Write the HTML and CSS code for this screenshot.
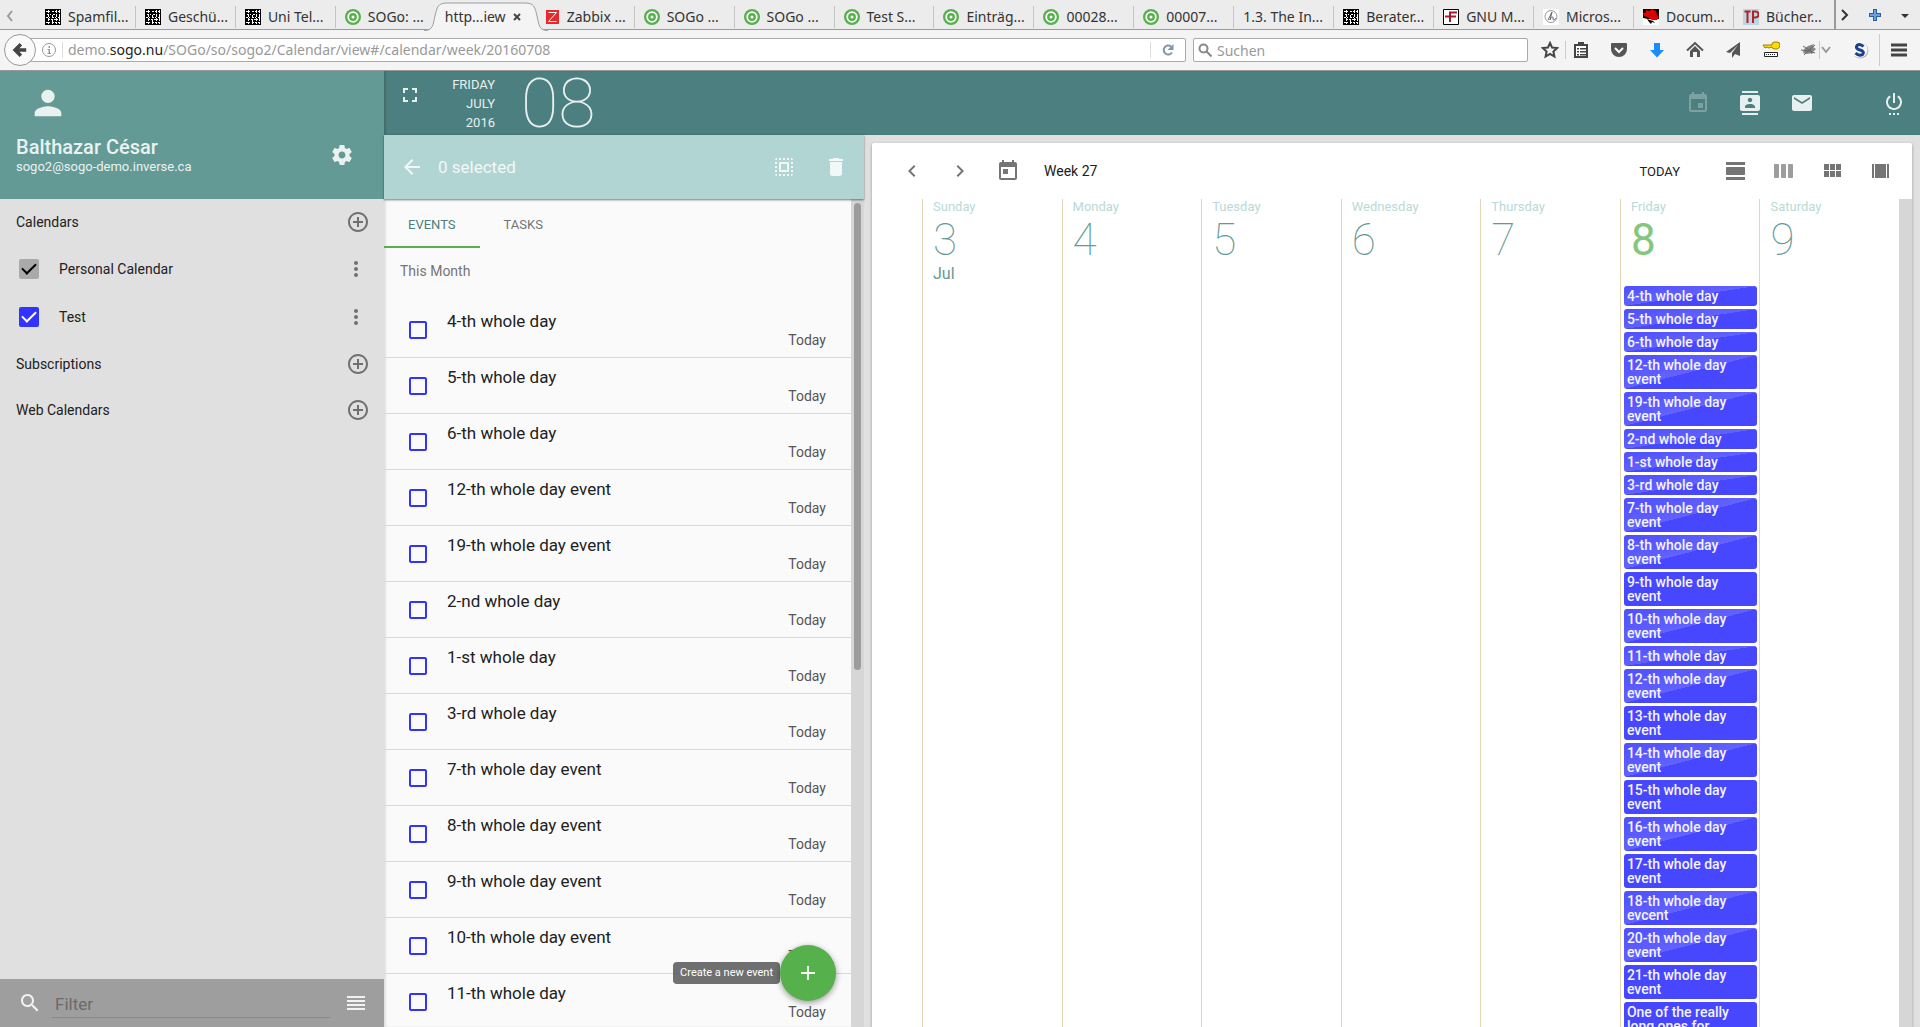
FILE: index.html
```html
<!DOCTYPE html>
<html lang="en">
<head>
    <meta charset="UTF-8">
    <meta name="viewport" content="width=device-width, initial-scale=1.0">
    <title>SOGo Calendar</title>
    <link rel="stylesheet" href="styles.css">
</head>
<body>
    <!-- Shared icons -->
    <svg class="sprite" aria-hidden="true">
        <symbol id="i-qr" viewBox="0 0 16 16"><path fill="#000" d="M0 0h16v16H0z"/><path stroke="#fff" stroke-width="1" stroke-dasharray="2 1 1 2" d="M1 2.500h14M2 5.500h13M1 8.500h14M3 10.500h12M1 13.500h14"/><path stroke="#fff" stroke-width="1" stroke-dasharray="3 1" d="M3.500 1v14M7.500 6v9M11.500 1v14M14.500 1v14"/></symbol>
        <symbol id="i-sogo" viewBox="0 0 16 16"><circle cx="8" cy="8" r="8" fill="#56b04c"/><circle cx="8" cy="8" r="4.800" fill="none" stroke="#fff" stroke-width="1.800"/><circle cx="8" cy="8" r="1.500" fill="#fff"/></symbol>
        <symbol id="i-plus-circle" viewBox="0 0 24 24"><path d="M13 7h-2v4H7v2h4v4h2v-4h4v-2h-4V7zm-1-5C6.480 2 2 6.480 2 12s4.480 10 10 10 10-4.480 10-10S17.520 2 12 2zm0 18c-4.410 0-8-3.590-8-8s3.590-8 8-8 8 3.590 8 8-3.590 8-8 8z"/></symbol>
        <symbol id="i-more" viewBox="0 0 24 24"><path d="M12 8c1.100 0 2-.9 2-2s-.9-2-2-2-2 .9-2 2 .9 2 2 2zm0 2c-1.100 0-2 .9-2 2s.9 2 2 2 2-.9 2-2-.9-2-2-2zm0 6c-1.100 0-2 .9-2 2s.9 2 2 2 2-.9 2-2-.9-2-2-2z"/></symbol>
        <symbol id="i-person" viewBox="0 0 24 24"><path d="M12 12c2.210 0 4-1.790 4-4s-1.790-4-4-4-4 1.790-4 4 1.790 4 4 4zm0 2c-2.670 0-8 1.340-8 4v2h16v-2c0-2.660-5.330-4-8-4z"/></symbol>
        <symbol id="i-settings" viewBox="0 0 24 24"><path d="M19.430 12.980c.04-.32.07-.64.07-.98s-.03-.66-.07-.98l2.110-1.650c.19-.15.24-.42.12-.64l-2-3.460c-.12-.22-.39-.3-.61-.22l-2.490 1c-.52-.4-1.080-.73-1.690-.98l-.38-2.650C14.460 2.180 14.250 2 14 2h-4c-.25 0-.46.18-.49.42l-.38 2.650c-.61.25-1.170.59-1.690.98l-2.490-1c-.23-.09-.49 0-.61.22l-2 3.460c-.13.22-.07.49.12.64l2.110 1.650c-.04.32-.07.65-.07.98s.03.66.07.98l-2.110 1.650c-.19.15-.24.42-.12.64l2 3.460c.12.22.39.3.61.22l2.490-1c.52.4 1.080.73 1.690.98l.38 2.650c.03.24.24.42.49.42h4c.25 0 .46-.18.49-.42l.38-2.650c.61-.25 1.170-.59 1.690-.98l2.490 1c.23.09.49 0 .61-.22l2-3.460c.12-.22.07-.49-.12-.64l-2.110-1.650zM12 15.500c-1.930 0-3.500-1.570-3.500-3.500s1.570-3.500 3.500-3.500 3.500 1.570 3.500 3.500-1.570 3.500-3.500 3.500z"/></symbol>
        <symbol id="i-search" viewBox="0 0 24 24"><path d="M15.500 14h-.79l-.28-.27C15.410 12.590 16 11.110 16 9.500 16 5.910 13.090 3 9.500 3S3 5.910 3 9.500 5.910 16 9.500 16c1.610 0 3.090-.59 4.230-1.570l.27.28v.79l5 4.990L20.490 19l-4.990-5zm-6 0C7.010 14 5 11.990 5 9.500S7.010 5 9.500 5 14 7.010 14 9.500 11.990 14 9.500 14z"/></symbol>
        <symbol id="i-headline" viewBox="0 0 24 24"><path d="M3 5h18v2H3zM3 9h18v2H3zM3 13h18v2H3zM3 17h18v2H3z"/></symbol>
        <symbol id="i-fullscreen" viewBox="0 0 24 24"><path d="M7 14H5v5h5v-2H7v-3zm-2-4h2V7h3V5H5v5zm12 7h-3v2h5v-5h-2v3zM14 5v2h3v3h2V5h-5z"/></symbol>
        <symbol id="i-event" viewBox="0 0 24 24"><path d="M17 12h-5v5h5v-5zM16 1v2H8V1H6v2H5c-1.110 0-1.990.9-1.990 2L3 19c0 1.100.89 2 2 2h14c1.100 0 2-.9 2-2V5c0-1.100-.9-2-2-2h-1V1h-2zm3 18H5V8h14v11z"/></symbol>
        <symbol id="i-today" viewBox="0 0 24 24"><path d="M19 3h-1V1h-2v2H8V1H6v2H5c-1.110 0-1.990.9-1.990 2L3 19c0 1.100.89 2 2 2h14c1.100 0 2-.9 2-2V5c0-1.100-.9-2-2-2zm0 16H5V8h14v11zM7 10h5v5H7z"/></symbol>
        <symbol id="i-contacts" viewBox="0 0 24 24"><path d="M20 0H4v2h16V0zM4 24h16v-2H4v2zM20 4H4c-1.100 0-2 .9-2 2v12c0 1.100.9 2 2 2h16c1.100 0 2-.9 2-2V6c0-1.100-.9-2-2-2zm-8 2.750c1.240 0 2.250 1.010 2.250 2.250s-1.010 2.250-2.250 2.250S9.750 10.240 9.750 9 10.760 6.750 12 6.750zM17 17H7v-1.500c0-1.670 3.330-2.500 5-2.500s5 .83 5 2.500V17z"/></symbol>
        <symbol id="i-mail" viewBox="0 0 24 24"><path d="M20 4H4c-1.100 0-1.990.9-1.990 2L2 18c0 1.100.9 2 2 2h16c1.100 0 2-.9 2-2V6c0-1.100-.9-2-2-2zm0 4l-8 5-8-5V6l8 5 8-5v2z"/></symbol>
        <symbol id="i-power" viewBox="0 0 24 24"><path d="M7 24h2v-2H7v2zm4 0h2v-2h-2v2zm2-22h-2v10h2V2zm3.560 2.440l-1.450 1.450C16.840 6.940 18 8.830 18 11c0 3.310-2.690 6-6 6s-6-2.690-6-6c0-2.170 1.160-4.060 2.880-5.120L7.440 4.440C5.360 5.880 4 8.280 4 11c0 4.420 3.580 8 8 8s8-3.580 8-8c0-2.720-1.360-5.120-3.440-6.560zM15 24h2v-2h-2v2z"/></symbol>
        <symbol id="i-back" viewBox="0 0 24 24"><path d="M20 11H7.830l5.590-5.590L12 4l-8 8 8 8 1.410-1.410L7.830 13H20v-2z"/></symbol>
        <symbol id="i-select-all" viewBox="0 0 24 24"><path d="M3 5h2V3c-1.100 0-2 .9-2 2zm0 8h2v-2H3v2zm4 8h2v-2H7v2zM3 9h2V7H3v2zm10-6h-2v2h2V3zm6 0v2h2c0-1.100-.9-2-2-2zM5 21v-2H3c0 1.100.9 2 2 2zm-2-4h2v-2H3v2zM9 3H7v2h2V3zm2 18h2v-2h-2v2zm8-8h2v-2h-2v2zm0 8c1.100 0 2-.9 2-2h-2v2zm0-12h2V7h-2v2zm0 8h2v-2h-2v2zm-4 4h2v-2h-2v2zm0-16h2V3h-2v2zM7 17h10V7H7v10zm2-8h6v6H9V9z"/></symbol>
        <symbol id="i-delete" viewBox="0 0 24 24"><path d="M6 19c0 1.100.9 2 2 2h8c1.100 0 2-.9 2-2V7H6v12zM19 4h-3.500l-1-1h-5l-1 1H5v2h14V4z"/></symbol>
        <symbol id="i-left" viewBox="0 0 24 24"><path d="M15.410 7.410L14 6l-6 6 6 6 1.410-1.410L10.830 12z"/></symbol>
        <symbol id="i-right" viewBox="0 0 24 24"><path d="M10 6L8.590 7.410 13.170 12l-4.580 4.590L10 18l6-6z"/></symbol>
        <symbol id="i-day" viewBox="0 0 24 24"><path d="M2 21h19v-3H2v3zM20 8H3c-.55 0-1 .45-1 1v6c0 .55.45 1 1 1h17c.55 0 1-.45 1-1V9c0-.55-.45-1-1-1zM2 3v3h19V3H2z"/></symbol>
        <symbol id="i-week" viewBox="0 0 24 24"><path d="M6 5H3c-.55 0-1 .45-1 1v12c0 .55.45 1 1 1h3c.55 0 1-.45 1-1V6c0-.55-.45-1-1-1zm14 0h-3c-.55 0-1 .45-1 1v12c0 .55.45 1 1 1h3c.55 0 1-.45 1-1V6c0-.55-.45-1-1-1zm-7 0h-3c-.55 0-1 .45-1 1v12c0 .55.45 1 1 1h3c.55 0 1-.45 1-1V6c0-.55-.45-1-1-1z"/></symbol>
        <symbol id="i-month" viewBox="0 0 24 24"><path d="M4 11h5V5H4v6zm0 7h5v-6H4v6zm6 0h5v-6h-5v6zm6 0h5v-6h-5v6zm-6-7h5V5h-5v6zm6-6v6h5V5h-5z"/></symbol>
        <symbol id="i-multi" viewBox="0 0 24 24"><path d="M4 5h2v14H4zM7 5h11v14H7zM19 5h2v14h-2z"/></symbol>
    </svg>

    <!-- Browser tabs -->
    <nav class="tabstrip" aria-label="Browser tabs">
        <svg class="tab-scroll" viewBox="0 0 12 14"><path d="M8 2L4 7l4 5" fill="none" stroke="#999" stroke-width="2"/></svg>
        <div class="tab"><svg class="favicon"><use href="#i-qr"/></svg>Spamfil...</div>
        <div class="tab"><svg class="favicon"><use href="#i-qr"/></svg>Geschü...</div>
        <div class="tab"><svg class="favicon"><use href="#i-qr"/></svg>Uni Tel...</div>
        <div class="tab tab-plain"><svg class="favicon"><use href="#i-sogo"/></svg>SOGo: ...</div>
        <div class="tab tab-active">
            <svg class="tab-shape" viewBox="0 0 124 30" preserveAspectRatio="none"><path d="M0 29.500C9 29.500 9 24 11 15 13 6 14 2 23 2H101C110 2 111 6 113 15 115 24 115 29.500 124 29.500V30H0z" fill="#f4f4f4"/><path d="M0 29.500C9 29.500 9 24 11 15 13 6 14 2 23 2H101C110 2 111 6 113 15 115 24 115 29.500 124 29.500" fill="none" stroke="#9a9fa6"/></svg>
            <span>http...iew</span>
            <button class="tab-close" aria-label="Close tab"><svg viewBox="0 0 8 8"><path d="M1 1l6 6M7 1L1 7" stroke="#444" stroke-width="2"/></svg></button>
        </div>
        <div class="tab"><svg class="favicon" viewBox="0 0 16 16"><path fill="#e8292c" d="M2 1h13v14H2z"/><path d="M4.500 3.500h8l-8 9h8" fill="none" stroke="#fff"/></svg>Zabbix ...</div>
        <div class="tab"><svg class="favicon"><use href="#i-sogo"/></svg>SOGo ...</div>
        <div class="tab"><svg class="favicon"><use href="#i-sogo"/></svg>SOGo ...</div>
        <div class="tab"><svg class="favicon"><use href="#i-sogo"/></svg>Test S...</div>
        <div class="tab"><svg class="favicon"><use href="#i-sogo"/></svg>Einträg...</div>
        <div class="tab"><svg class="favicon"><use href="#i-sogo"/></svg>00028...</div>
        <div class="tab"><svg class="favicon"><use href="#i-sogo"/></svg>00007...</div>
        <div class="tab">1.3. The In...</div>
        <div class="tab"><svg class="favicon"><use href="#i-qr"/></svg>Berater...</div>
        <div class="tab"><svg class="favicon" viewBox="0 0 16 16"><path fill="#fff" stroke="#000" d="M.5.500h15v15H.500z"/><path d="M7 13V3.500h7M2 7.500h11" fill="none" stroke="#a8192e" stroke-width="2"/></svg>GNU M...</div>
        <div class="tab"><svg class="favicon" viewBox="0 0 16 16"><path fill="#fff" d="M0 0h16v16H0z"/><circle cx="8" cy="7.500" r="6" fill="none" stroke="#999"/><path d="M5 11L9 3 7 11c1-4 4-4 3-1 0 2 2 1 3-1" fill="none" stroke="#666"/></svg>Micros...</div>
        <div class="tab"><svg class="favicon" viewBox="0 0 16 16"><path fill="#000" d="M0 0h16v10H0z"/><path fill="#fff" d="M0 9l5 1 6 3 5-3v6H0z"/><path fill="#d00" d="M3 1l3 1 3-2 4 2 1 4 2 2-2 3-5 0-5-3-3-1-1-3 3-1z"/><path fill="#000" d="M4 10l6 2 2 2-3-1-1 2-2-2z"/></svg>Docum...</div>
        <div class="tab tab-plain"><svg class="favicon" viewBox="0 0 16 16"><path fill="#bcd7e2" d="M0 0h16v16H0z"/><path d="M1.500 2.500h6M4.500 2v12M10 14V2.500h2.500a2 2 0 0 1 0 6H10" fill="none" stroke="#b3222b" stroke-width="2"/></svg>Bücher...</div>
        <div class="tab-tools">
            <svg viewBox="0 0 12 14"><path d="M3 2l5 5-5 5" fill="none" stroke="#333" stroke-width="2"/></svg>
            <svg viewBox="0 0 12 14"><path d="M6 1v12M0 7h12" stroke="#2a5ea8" stroke-width="4"/><path d="M6 2v10M1 7h10" stroke="#6ea0dc" stroke-width="2"/></svg>
            <svg viewBox="0 0 12 14"><path d="M2 6h8l-4 4z" fill="#333"/></svg>
        </div>
    </nav>

    <!-- Address bar -->
    <div class="navbar">
        <button class="nav-back" aria-label="Back"><svg viewBox="0 0 18 18"><path d="M16 9H5M10 2.500L3.500 9l6.500 6.500" fill="none" stroke="#444" stroke-width="4"/></svg></button>
        <div class="urlbar">
            <svg class="url-info" viewBox="0 0 16 16"><circle cx="8" cy="8" r="6.500" fill="none" stroke="#999"/><path d="M7.500 4h1.500v2H7.500zM6.500 7H9v4h1v1H6.500v-1h1V8h-1z" fill="#999"/></svg>
            <span class="url-text">demo.<b>sogo.nu</b>/SOGo/so/sogo2/Calendar/view#/calendar/week/20160708</span>
            <button class="url-reload" aria-label="Reload"><svg viewBox="0 0 14 14"><path d="M11 9.500A4.500 4.500 0 1 1 10 3.500" fill="none" stroke="#8595a8" stroke-width="2"/><path d="M12.500 1v6h-6z" fill="#8595a8"/></svg></button>
        </div>
        <div class="searchbar">
            <svg viewBox="0 0 14 14"><circle cx="5.500" cy="5.500" r="4" fill="none" stroke="#888" stroke-width="2"/><path d="M8.500 8.500l5 5" stroke="#888" stroke-width="2"/></svg>
            <input type="text" placeholder="Suchen" aria-label="Suchen">
        </div>
        <div class="nav-icons">
            <svg viewBox="0 0 18 18"><path d="M9 2l2.100 4.600 5 .5-3.700 3.400 1 5L9 13l-4.400 2.500 1-5L1.900 7.100l5-.5z" fill="none" stroke="#444" stroke-width="2"/></svg>
            <i class="nav-sep"></i>
            <svg viewBox="0 0 18 18"><path d="M3 4h12v12H3z" fill="#fff" stroke="#444" stroke-width="2"/><path d="M6 1h6v4H6zM5 7h2v1.500H5zM8 7h6v1.500H8zM5 10h2v1.500H5zM8 10h6v1.500H8zM5 13h2v1.500H5zM8 13h6v1.500H8z" fill="#444"/></svg>
            <svg viewBox="0 0 18 18"><path d="M2 2h14q1 0 1 1v5a8 8 0 0 1-16 0V3q0-1 1-1z" fill="#555"/><path d="M5 7l4 4 4-4" fill="none" stroke="#fff" stroke-width="2"/></svg>
            <svg viewBox="0 0 18 18"><path d="M6 2h6v7h4l-7 7.500L2 9h4z" fill="#1a8cff"/></svg>
            <svg viewBox="0 0 18 18"><path d="M1 9.500L9 2l8 7.500" fill="none" stroke="#555" stroke-width="2"/><path d="M4 10l5-5 5 5v6h-3v-5H7v5H4z" fill="#555"/></svg>
            <svg viewBox="0 0 18 18"><path d="M16 1v14l-5-2-3 4v-5l6-8-8 8-4-1z" fill="#555"/></svg>
            <svg viewBox="0 0 18 18"><path d="M1 4h9v-1q0-2 3-2h2q3 0 3 3t-3 4h-2q-3 0-3-2l-3 1-2-1-2 1z" fill="#fd0" stroke="#a08000"/><path d="M2.500 11.500h13v4h-13z" fill="#fff" stroke="#222"/><path d="M4 13.500h9" stroke="#222" stroke-dasharray="1 1"/></svg>
            <svg viewBox="0 0 18 18"><path d="M4 8l4-3 6-2-1 3 3 2-4 4-5 1-4-1z" fill="#888"/><path d="M3 5l6 4 6-5M4 14l6-6 2 5M1 9l8 1 6 2" fill="none" stroke="#666"/></svg>
            <i class="nav-sep nav-sep-tight"></i>
            <svg class="nav-chevron" viewBox="0 0 10 18"><path d="M1 6l4 5 4-5" fill="none" stroke="#999" stroke-width="2"/></svg>
            <svg viewBox="0 0 18 18"><circle cx="9.500" cy="9.500" r="8" fill="#bbb"/><circle cx="8.500" cy="8.500" r="8" fill="#f6f6f6"/><path d="M12.500 5.500Q9 2 6 4.500q-2 3 3 4.500t2.500 4.500Q8 15.500 4.500 12" fill="none" stroke="#1c3f8f" stroke-width="3"/></svg>
            <i class="nav-sep nav-sep-tall"></i>
            <svg viewBox="0 0 18 18"><path d="M1 4h16M1 9h16M1 14h16" stroke="#444" stroke-width="3"/></svg>
        </div>
    </div>

    <div class="app">
        <aside class="sidebar">
            <header class="user">
                <svg class="avatar"><use href="#i-person"/></svg>
                <div class="user-row">
                    <div>
                        <div class="user-name">Balthazar César</div>
                        <div class="user-mail">sogo2@sogo-demo.inverse.ca</div>
                    </div>
                    <button class="icon-btn" aria-label="Settings"><svg class="icon"><use href="#i-settings"/></svg></button>
                </div>
            </header>
            <div class="folders">
                <div class="folder-head">Calendars<button class="icon-btn" aria-label="New calendar"><svg class="icon"><use href="#i-plus-circle"/></svg></button></div>
                <div class="folder">
                    <label><input type="checkbox" class="check check-grey" checked>Personal Calendar</label>
                    <button class="icon-btn" aria-label="Options"><svg class="icon"><use href="#i-more"/></svg></button>
                </div>
                <div class="folder">
                    <label><input type="checkbox" class="check check-blue" checked>Test</label>
                    <button class="icon-btn" aria-label="Options"><svg class="icon"><use href="#i-more"/></svg></button>
                </div>
                <div class="folder-head">Subscriptions<button class="icon-btn" aria-label="Add subscription"><svg class="icon"><use href="#i-plus-circle"/></svg></button></div>
                <div class="folder-head">Web Calendars<button class="icon-btn" aria-label="Add web calendar"><svg class="icon"><use href="#i-plus-circle"/></svg></button></div>
            </div>
            <div class="filter">
                <svg class="icon"><use href="#i-search"/></svg>
                <input type="text" placeholder="Filter" aria-label="Filter">
                <button class="icon-btn" aria-label="Sort"><svg class="icon"><use href="#i-headline"/></svg></button>
            </div>
        </aside>

        <div class="main">
            <header class="topbar">
                <button class="icon-btn fullscreen" aria-label="Full screen"><svg class="icon"><use href="#i-fullscreen"/></svg></button>
                <div class="date-words">FRIDAY<br>JULY<br>2016</div>
                <div class="date-number">08</div>
                <nav class="modules">
                    <button class="icon-btn" aria-label="Calendar" disabled><svg class="icon"><use href="#i-event"/></svg></button>
                    <button class="icon-btn" aria-label="Address book"><svg class="icon"><use href="#i-contacts"/></svg></button>
                    <button class="icon-btn" aria-label="Mail"><svg class="icon"><use href="#i-mail"/></svg></button>
                    <button class="icon-btn power" aria-label="Disconnect"><svg class="icon"><use href="#i-power"/></svg></button>
                </nav>
            </header>

            <div class="content">
                <section class="list">
                    <div class="list-toolbar">
                        <button class="icon-btn" aria-label="Back"><svg class="icon"><use href="#i-back"/></svg></button>
                        <span class="selected">0 selected</span>
                        <button class="icon-btn" aria-label="Select all"><svg class="icon"><use href="#i-select-all"/></svg></button>
                        <button class="icon-btn" aria-label="Delete"><svg class="icon"><use href="#i-delete"/></svg></button>
                    </div>
                    <div class="list-body">
                        <div class="list-scroll">
                            <div class="list-tabs">
                                <button class="list-tab list-tab-active">EVENTS</button>
                                <button class="list-tab">TASKS</button>
                            </div>
                            <div class="subheader">This Month</div>
                            <label class="item"><input type="checkbox" class="box"><span class="item-title">4-th whole day</span><span class="item-date">Today</span></label>
                            <label class="item"><input type="checkbox" class="box"><span class="item-title">5-th whole day</span><span class="item-date">Today</span></label>
                            <label class="item"><input type="checkbox" class="box"><span class="item-title">6-th whole day</span><span class="item-date">Today</span></label>
                            <label class="item"><input type="checkbox" class="box"><span class="item-title">12-th whole day event</span><span class="item-date">Today</span></label>
                            <label class="item"><input type="checkbox" class="box"><span class="item-title">19-th whole day event</span><span class="item-date">Today</span></label>
                            <label class="item"><input type="checkbox" class="box"><span class="item-title">2-nd whole day</span><span class="item-date">Today</span></label>
                            <label class="item"><input type="checkbox" class="box"><span class="item-title">1-st whole day</span><span class="item-date">Today</span></label>
                            <label class="item"><input type="checkbox" class="box"><span class="item-title">3-rd whole day</span><span class="item-date">Today</span></label>
                            <label class="item"><input type="checkbox" class="box"><span class="item-title">7-th whole day event</span><span class="item-date">Today</span></label>
                            <label class="item"><input type="checkbox" class="box"><span class="item-title">8-th whole day event</span><span class="item-date">Today</span></label>
                            <label class="item"><input type="checkbox" class="box"><span class="item-title">9-th whole day event</span><span class="item-date">Today</span></label>
                            <label class="item"><input type="checkbox" class="box"><span class="item-title">10-th whole day event</span><span class="item-date">Today</span></label>
                            <label class="item"><input type="checkbox" class="box"><span class="item-title">11-th whole day</span><span class="item-date">Today</span></label>
                        </div>
                        <div class="scrollbar"><div class="scroll-thumb"></div></div>
                    </div>
                    <div class="fab-area">
                        <span class="tooltip">Create a new event</span>
                        <button class="fab" aria-label="Create a new event"><svg viewBox="0 0 24 24"><path d="M19 13h-6v6h-2v-6H5v-2h6V5h2v6h6v2z"/></svg></button>
                    </div>
                </section>

                <section class="calendar">
                    <div class="calendar-toolbar">
                        <button class="icon-btn" aria-label="Previous week"><svg class="icon"><use href="#i-left"/></svg></button>
                        <button class="icon-btn" aria-label="Next week"><svg class="icon"><use href="#i-right"/></svg></button>
                        <button class="icon-btn" aria-label="Choose date"><svg class="icon"><use href="#i-today"/></svg></button>
                        <span class="week">Week 27</span>
                        <button class="today">TODAY</button>
                        <button class="icon-btn" aria-label="Day"><svg class="icon"><use href="#i-day"/></svg></button>
                        <button class="icon-btn" aria-label="Week" disabled><svg class="icon"><use href="#i-week"/></svg></button>
                        <button class="icon-btn" aria-label="Month"><svg class="icon"><use href="#i-month"/></svg></button>
                        <button class="icon-btn" aria-label="Columns"><svg class="icon"><use href="#i-multi"/></svg></button>
                    </div>
                    <div class="week-grid">
                        <div class="hours"></div>
                        <div class="day"><div class="day-head"><span class="day-name">Sunday</span><span class="day-number">3</span><span class="day-month">Jul</span></div></div>
                        <div class="day"><div class="day-head"><span class="day-name">Monday</span><span class="day-number">4</span></div></div>
                        <div class="day"><div class="day-head"><span class="day-name">Tuesday</span><span class="day-number">5</span></div></div>
                        <div class="day"><div class="day-head"><span class="day-name">Wednesday</span><span class="day-number">6</span></div></div>
                        <div class="day"><div class="day-head"><span class="day-name">Thursday</span><span class="day-number">7</span></div></div>
                        <div class="day day-today">
                            <div class="day-head"><span class="day-name">Friday</span><span class="day-number">8</span></div>
                            <div class="event shine">4-th whole day</div>
                            <div class="event shine">5-th whole day</div>
                            <div class="event shine">6-th whole day</div>
                            <div class="event shine">12-th whole day event</div>
                            <div class="event shine">19-th whole day event</div>
                            <div class="event shine">2-nd whole day</div>
                            <div class="event shine">1-st whole day</div>
                            <div class="event shine">3-rd whole day</div>
                            <div class="event shine">7-th whole day event</div>
                            <div class="event shine">8-th whole day event</div>
                            <div class="event">9-th whole day event</div>
                            <div class="event shine">10-th whole day event</div>
                            <div class="event shine">11-th whole day</div>
                            <div class="event shine">12-th whole day event</div>
                            <div class="event">13-th whole day event</div>
                            <div class="event shine">14-th whole day event</div>
                            <div class="event">15-th whole day event</div>
                            <div class="event shine">16-th whole day event</div>
                            <div class="event">17-th whole day event</div>
                            <div class="event shine">18-th whole day evcent</div>
                            <div class="event shine">20-th whole day event</div>
                            <div class="event">21-th whole day event</div>
                            <div class="event">One of the really long ones for</div>
                        </div>
                        <div class="day"><div class="day-head"><span class="day-name">Saturday</span><span class="day-number">9</span></div></div>
                        <div class="scrollbar"></div>
                    </div>
                </section>
            </div>
        </div>
    </div>
</body>
</html>
```
FILE: styles.css
```css
:root {
    --teal: #639a96;
    --teal-dark: #4c7f7f;
    --teal-light: #b0d5d3;
    --green: #56b04c;
    --blue: #3333ff;
    --grey: #e0e0e0;
}
* {
    box-sizing: border-box;
}
body {
    display: flex;
    flex-direction: column;
    height: 100vh;
    margin: 0;
    overflow: hidden;
    font-family: Roboto, "Noto Sans", sans-serif;
    font-size: 14px;
    color: #212121;
    background-color: var(--grey);
}
button, input {
    font: inherit;
    color: inherit;
    margin: 0;
    padding: 0;
    border: 0;
    background: none;
}
.sprite {
    display: none;
}

/* Browser tabs */
.tabstrip {
    display: flex;
    flex: none;
    align-items: center;
    height: 30px;
    padding-right: 9px;
    background-color: #ececec;
    border-bottom: 1px solid #9a9a9a;
    font-family: "Noto Sans", sans-serif;
    color: #333;
}
.tab-scroll {
    width: 12px;
    height: 14px;
    margin: 3px 20px 0 4px;
}
.tab {
    display: flex;
    flex: 1 1 0;
    align-items: center;
    gap: 7px;
    height: 22px;
    margin-top: 4px;
    padding-left: 9px;
    border-right: 1px solid #c4c4c4;
    white-space: nowrap;
}
.tab-plain {
    border-right-color: transparent;
}
.favicon {
    flex: none;
    width: 16px;
    height: 16px;
}
.tab-active {
    position: relative;
    border: 0;
}
.tab-active span, .tab-close {
    position: relative;
}
.tab-shape {
    position: absolute;
    left: -12px;
    top: -5px;
    width: 124px;
    height: 30px;
}
.tab-close, .tab-close svg {
    display: block;
    width: 8px;
    height: 8px;
}
.tab-tools {
    display: flex;
    align-items: center;
    gap: 18px;
    height: 29px;
    padding-left: 3px;
    border-left: 2px solid #999;
}
.tab-tools svg {
    width: 12px;
    height: 14px;
}

/* Address bar */
.navbar {
    display: flex;
    flex: none;
    align-items: center;
    height: 41px;
    padding: 0 12px 0 4px;
    background-color: #f4f4f4;
    border-bottom: 1px solid #999;
    font-family: "Noto Sans", sans-serif;
}
.nav-back {
    z-index: 1;
    display: flex;
    align-items: center;
    justify-content: center;
    width: 32px;
    height: 32px;
    margin-right: -8px;
    background-color: #fafafa;
    border: 1px solid #999;
    border-radius: 50%;
}
.nav-back svg {
    width: 16px;
    height: 16px;
}
.urlbar, .searchbar {
    display: flex;
    align-items: center;
    height: 24px;
    background-color: #fff;
    border: 1px solid #aaa;
    border-radius: 2px;
}
.urlbar {
    flex: 1;
    padding-left: 12px;
    color: #999;
}
.url-info {
    width: 16px;
    height: 16px;
}
.url-text {
    flex: 1;
    margin-left: 5px;
    padding-left: 5px;
    border-left: 1px solid #ddd;
    line-height: 16px;
}
.url-text b {
    font-weight: 400;
    color: #222;
}
.url-reload {
    height: 16px;
    padding: 0 10px;
    border-left: 1px solid #ddd;
}
.url-reload svg {
    display: block;
    width: 14px;
    height: 14px;
}
.searchbar {
    width: 335px;
    margin-left: 7px;
    padding-left: 4px;
    gap: 5px;
}
.searchbar svg {
    width: 14px;
    height: 14px;
}
.searchbar input {
    flex: 1;
    min-width: 0;
}
.searchbar input::placeholder {
    color: #999;
    opacity: 1;
}
.nav-icons {
    display: flex;
    align-items: center;
    gap: 20px;
    margin-left: 13px;
}
.nav-icons svg {
    width: 18px;
    height: 18px;
}
.nav-sep {
    width: 1px;
    height: 18px;
    margin: 0 -14px;
    background-color: #ccc;
}
.nav-sep-tight {
    margin: 0 -19px;
}
.nav-sep-tall {
    height: 32px;
    margin: 0 -10px;
}
.nav-icons .nav-chevron {
    width: 10px;
}

/* App shell */
.app {
    display: flex;
    flex: 1;
    min-height: 0;
}
.icon {
    display: block;
    width: 24px;
    height: 24px;
    fill: currentColor;
}
.icon-btn {
    flex: none;
    cursor: pointer;
}
.icon-btn:disabled {
    opacity: 0.3;
}

/* Sidebar */
.sidebar {
    display: flex;
    flex-direction: column;
    width: 20%;
}
.user {
    height: 128px;
    padding: 12px 30px 0 16px;
    color: #eaf2f1;
    background-color: var(--teal);
}
.avatar {
    display: block;
    width: 42px;
    height: 40px;
    margin-left: 11px;
    fill: currentColor;
}
.user-row {
    display: flex;
    align-items: center;
    justify-content: space-between;
    margin-top: 12px;
}
.user-name {
    font-size: 20px;
    font-weight: 500;
    line-height: 24px;
}
.user-mail {
    font-size: 13px;
    line-height: 16px;
}
.folders {
    flex: 1;
}
.folder-head, .folder {
    display: flex;
    align-items: center;
    justify-content: space-between;
    height: 46px;
    padding: 0 14px 0 16px;
}
.folder {
    height: 48px;
    padding: 0 16px 0 19px;
}
.folders .icon-btn {
    color: #707070;
}
.folder label {
    display: flex;
    align-items: center;
    gap: 20px;
}
.check {
    appearance: none;
    display: grid;
    place-items: center;
    width: 20px;
    height: 20px;
    border-radius: 2px;
}
.check::after {
    content: "";
    width: 6px;
    height: 12px;
    margin-bottom: 4px;
    border: solid currentColor;
    border-width: 0 2px 2px 0;
    transform: rotate(45deg);
}
.check-grey {
    color: #000;
    background-color: #aaa;
}
.check-blue {
    color: #fff;
    background-color: var(--blue);
}
.filter {
    display: flex;
    align-items: center;
    height: 48px;
    padding: 0 16px 0 18px;
    color: #f2f2f2;
    background-color: #9e9e9e;
}
.filter input {
    flex: 1;
    min-width: 0;
    height: 30px;
    margin: 0 14px 0 10px;
    padding: 2px 0 0 3px;
    font-size: 17px;
    border-bottom: 1px solid #888;
}
.filter input::placeholder {
    color: #6a6a6a;
    opacity: 1;
}

/* Top bar */
.main {
    display: flex;
    flex: 1;
    flex-direction: column;
    min-width: 0;
}
.topbar {
    display: flex;
    flex: none;
    height: 64px;
    padding: 0 14px;
    color: #e8f0ef;
    background-color: var(--teal-dark);
    box-shadow: inset 2px 0 2px rgba(0,0,0,0.15);
}
.fullscreen {
    align-self: flex-start;
    margin-top: 12px;
}
.date-words {
    width: 73px;
    padding-top: 4px;
    font-size: 13px;
    line-height: 19px;
    text-align: right;
}
.date-number {
    margin-left: 26px;
    font-size: 68px;
    font-weight: 100;
    line-height: 66px;
}
.modules {
    display: flex;
    flex: 1;
    align-items: center;
    justify-content: flex-end;
    gap: 28px;
}
.power {
    margin-left: 40px;
}
.content {
    display: flex;
    flex: 1;
    min-height: 0;
}

/* Event list */
.list {
    position: relative;
    display: flex;
    flex: none;
    flex-direction: column;
    width: 480px;
}
.list-toolbar {
    z-index: 1;
    display: flex;
    flex: none;
    align-items: center;
    gap: 28px;
    height: 64px;
    padding: 0 16px;
    color: #f2f8f8;
    background-color: var(--teal-light);
    box-shadow: 0 1px 2px rgba(0,0,0,0.5);
}
.selected {
    flex: 1;
    margin-left: -14px;
    font-size: 17px;
}
.list-body {
    display: flex;
    flex: 1;
    min-height: 0;
}
.list-scroll {
    flex: 1;
    overflow: hidden;
    background-color: #fafafa;
    box-shadow: inset 2px 0 2px rgba(0,0,0,0.1);
}
.scrollbar {
    flex: none;
    width: 13px;
    padding: 4px 3px;
    background-color: #d6d6d6;
}
.scroll-thumb {
    height: 57%;
    border-radius: 4px;
    background-color: #9c9c9c;
}
.list-tabs {
    display: flex;
    height: 49px;
}
.list-tab {
    padding: 3px 24px 0;
    font-size: 13px;
    color: #757575;
    border-bottom: 2px solid transparent;
}
.list-tab-active {
    color: var(--teal-dark);
    border-bottom-color: var(--green);
}
.subheader {
    height: 54px;
    padding: 0 16px;
    line-height: 46px;
    color: #757575;
}
.item {
    display: flex;
    align-items: center;
    height: 56px;
    padding: 0 25px;
    border-bottom: 1px solid #d9d9d9;
}
.box {
    appearance: none;
    width: 18px;
    height: 18px;
    border: 2px solid var(--blue);
    border-radius: 2px;
}
.item-title {
    align-self: flex-start;
    flex: 1;
    margin-left: 20px;
    padding-top: 9px;
    font-size: 17px;
    line-height: 20px;
}
.item-date {
    align-self: flex-end;
    padding-bottom: 9px;
    line-height: 16px;
    color: #555;
}
.fab-area {
    position: absolute;
    right: 28px;
    bottom: 26px;
    display: flex;
    align-items: center;
}
.tooltip {
    padding: 0 7px;
    font-size: 11px;
    line-height: 22px;
    color: #fff;
    background-color: rgba(97,97,97,0.9);
    border-radius: 4px;
}
.fab {
    width: 56px;
    height: 56px;
    border-radius: 50%;
    background-color: var(--green);
    box-shadow: 0 2px 6px rgba(0,0,0,0.4);
}
.fab svg {
    display: block;
    width: 24px;
    height: 24px;
    margin: auto;
    fill: #f2f8f2;
}

/* Calendar */
.calendar {
    display: flex;
    flex: 1;
    flex-direction: column;
    min-width: 0;
    margin: 8px 8px 0;
    background-color: #fff;
    border-radius: 2px 2px 0 0;
    box-shadow: 0 1px 3px rgba(0,0,0,0.35);
}
.calendar-toolbar {
    display: flex;
    flex: none;
    align-items: center;
    gap: 24px;
    height: 56px;
    padding: 0 20px 0 28px;
}
.calendar-toolbar .icon-btn {
    color: #757575;
}
.calendar-toolbar .icon-btn:disabled {
    opacity: 0.7;
}
.week {
    flex: 1;
}
.today {
    margin-right: 20px;
    font-size: 13px;
}
.week-grid {
    display: flex;
    flex: 1;
    min-height: 0;
    overflow: hidden;
}
.hours {
    flex: none;
    width: 50px;
}
.day {
    flex: 1 1 0;
    min-width: 0;
    border-left: 1px solid #e2d6b5;
}
.day-head {
    display: flex;
    flex-direction: column;
    height: 87px;
    padding-left: 10px;
    color: var(--teal);
}
.day-name {
    font-size: 13px;
    line-height: 16px;
    color: #b9d9d7;
}
.day-number {
    font-size: 44px;
    font-weight: 100;
    line-height: 50px;
}
.day-month {
    font-size: 16px;
    line-height: 18px;
}
.day-today .day-number {
    font-weight: 400;
    color: #84c77c;
}
.event {
    margin: 0 2px 3px 3px;
    padding: 3px;
    font-weight: 500;
    line-height: 14px;
    color: #f4f4ff;
    background-color: #4747ff;
    border-radius: 3px;
}
.shine {
    background-image: linear-gradient(to bottom right, #4f4fff, #6262ff 50%, #4747ff 50%);
}
```
